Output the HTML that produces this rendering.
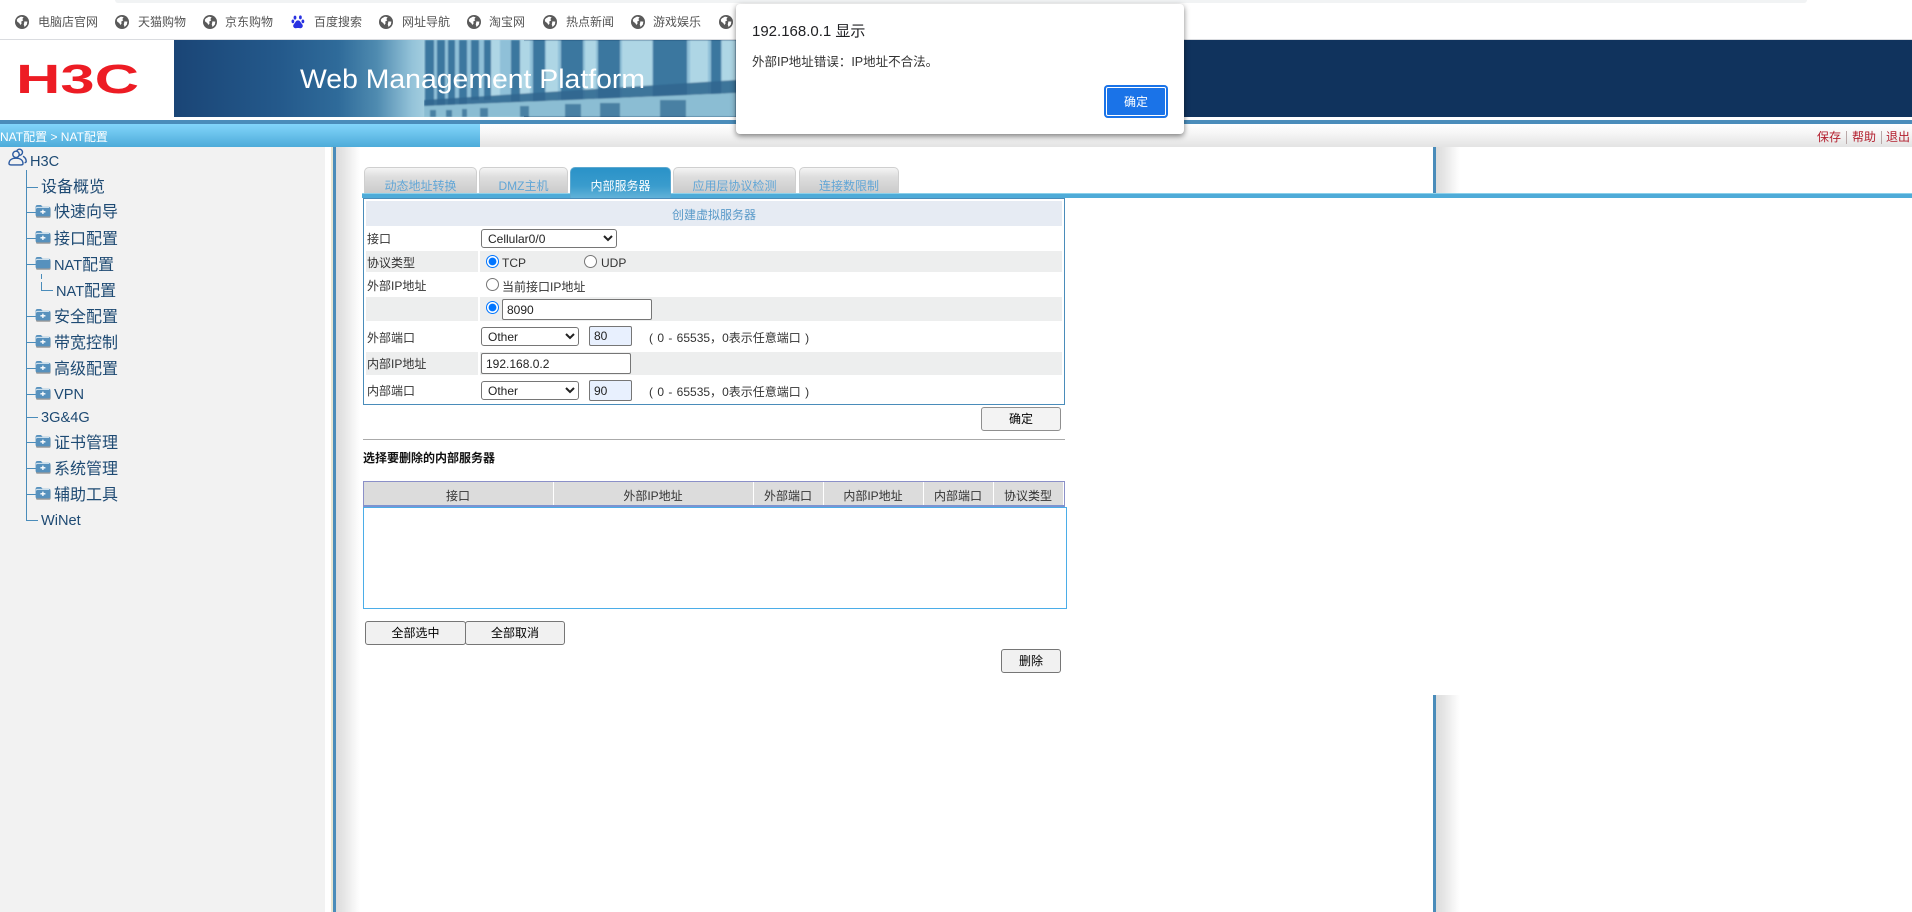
<!DOCTYPE html>
<html lang="zh"><head><meta charset="utf-8"><title>H3C</title>
<style>
html,body{margin:0;padding:0;background:#fff}
body{position:relative;width:1912px;height:912px;overflow:hidden;font:12px/16px "Liberation Sans","Noto Sans CJK SC",sans-serif;color:#222}
div,span,svg,input,select,button{position:absolute;box-sizing:border-box}
b.p{position:static;font-weight:400;font-family:"Noto Sans CJK TC",sans-serif}
.t{white-space:nowrap;height:16px;line-height:16px}
.bm{color:#555}
.tree{font-size:16px;color:#1e4a73;height:20px;line-height:20px;white-space:nowrap}
.tree i{font-style:normal;font-size:14.6px}
.ln{background:#4a8cba}
.tab{top:167px;height:26px;border:1px solid #cfcfcf;border-bottom:0;border-radius:5px 5px 0 0;background:linear-gradient(#f4f4f4,#dedede 35%,#cbcbcb);color:#62a6d6;text-align:center;line-height:36px}
.gray{background:#edeeee}
select{font:12px "Liberation Sans",sans-serif;color:#222;background:#fff;border:1px solid #767676;border-radius:3px;padding:0 0 0 2px;margin:0}
input[type=text]{font:12px "Liberation Sans",sans-serif;color:#222;border:1px solid #767676;border-radius:2px;padding:0 0 0 4px;margin:0;background:#fff}
input[type=radio]{margin:0;width:13px;height:13px;accent-color:#0075ff}
button{font:12px "Liberation Sans","Noto Sans CJK SC",sans-serif;color:#000;background:#f1f1f1;border:1px solid #767676;border-radius:3px;padding:0 0 2px;margin:0}
.lab{left:367px;color:#333}
.th{top:488px;color:#333;text-align:center;transform:translateX(-50%)}
</style></head><body>

<!-- browser chrome strip -->
<div style="left:115px;top:0;width:1692px;height:3px;background:#f1f3f4;border-radius:0 0 6px 6px"></div>
<div style="left:0;top:39px;width:1912px;height:1px;background:#dadce0"></div>

<svg width="0" height="0" style="left:0;top:0"><defs>
<g id="gl"><circle cx="7" cy="7" r="7" fill="#5a5a5a"/><path d="M3 3.2L6 1.6 8.6 2.2 7.4 4 8.2 5.4 6.2 6.6 6.6 8.4 5.4 10 4.2 8 2.2 6.6 1.8 4.8Z" fill="#fff"/><path d="M9.4 6.4L12.4 6.6 11.8 9.6 9.6 12 8.8 9.6Z" fill="#fff"/></g>
<g id="fo"><path d="M1 3.2Q1 1.2 3 1.2H6.4L8 3H14Q15.6 3 15.6 4.6V11.4Q15.6 13 14 13H2.6Q1 13 1 11.4Z" fill="#9a9a9a" transform="translate(0 .8)"/><path d="M.6 3Q.6 1 2.6 1H6L7.6 2.8H13.8Q15.4 2.8 15.4 4.4V10.8Q15.4 12.4 13.8 12.4H2.2Q.6 12.4 .6 10.8Z" fill="#5791bd"/><path d="M1.4 4.4Q1.4 3.4 2.4 3.4H14.2" stroke="#dbe9f3" fill="none"/><path d="M5.4 7.8H10.4M7.9 5.6V10" stroke="#fff" stroke-width="1.3"/></g>
<g id="fc"><path d="M1 3.2Q1 1.2 3 1.2H6.4L8 3H14Q15.6 3 15.6 4.6V11.4Q15.6 13 14 13H2.6Q1 13 1 11.4Z" fill="#9a9a9a" transform="translate(0 .8)"/><path d="M.6 3Q.6 1 2.6 1H6L7.6 2.8H13.8Q15.4 2.8 15.4 4.4V10.8Q15.4 12.4 13.8 12.4H2.2Q.6 12.4 .6 10.8Z" fill="#5791bd"/><path d="M1.4 4.4Q1.4 3.4 2.4 3.4H14.2" stroke="#dbe9f3" fill="none"/></g>
</defs></svg>

<!-- bookmarks -->
<svg style="left:15px;top:15px" width="14" height="14"><use href="#gl"/></svg><div class="t bm" style="left:38px;top:14px">电脑店官网</div>
<svg style="left:115px;top:15px" width="14" height="14"><use href="#gl"/></svg><div class="t bm" style="left:138px;top:14px">天猫购物</div>
<svg style="left:203px;top:15px" width="14" height="14"><use href="#gl"/></svg><div class="t bm" style="left:225px;top:14px">京东购物</div>
<svg style="left:291px;top:15px" width="14" height="14" viewBox="0 0 14 14" fill="#2932e1"><ellipse cx="4" cy="2.6" rx="1.4" ry="2"/><ellipse cx="9.4" cy="2.4" rx="1.4" ry="2"/><ellipse cx="1.9" cy="6.4" rx="1.4" ry="1.9"/><ellipse cx="11.9" cy="6.4" rx="1.4" ry="1.9"/><path d="M7 5.4C9.4 5.4 9.8 8 11.2 9.2 12.6 10.8 11.4 13.4 9 13.2 7.8 13 6.2 13 5 13.2 2.6 13.4 1.4 10.8 2.8 9.2 4.2 8 4.6 5.4 7 5.4Z"/></svg><div class="t bm" style="left:314px;top:14px">百度搜索</div>
<svg style="left:379px;top:15px" width="14" height="14"><use href="#gl"/></svg><div class="t bm" style="left:402px;top:14px">网址导航</div>
<svg style="left:467px;top:15px" width="14" height="14"><use href="#gl"/></svg><div class="t bm" style="left:489px;top:14px">淘宝网</div>
<svg style="left:543px;top:15px" width="14" height="14"><use href="#gl"/></svg><div class="t bm" style="left:566px;top:14px">热点新闻</div>
<svg style="left:631px;top:15px" width="14" height="14"><use href="#gl"/></svg><div class="t bm" style="left:653px;top:14px">游戏娱乐</div>
<svg style="left:719px;top:15px" width="14" height="14"><use href="#gl"/></svg>

<!-- header -->
<svg style="left:0;top:40px" width="174" height="77"><text transform="translate(16 53) scale(1.5 1)" font-family="Liberation Sans" font-weight="700" font-size="41" fill="#ed1c24">H3C</text></svg>
<svg style="left:174px;top:40px" width="1738" height="77" viewBox="174 40 1738 77">
<defs><linearGradient id="bg" x1="0" x2="1" y1="0" y2="0">
<stop offset="0" stop-color="#1a4576"/><stop offset=".3" stop-color="#24598b"/><stop offset=".47" stop-color="#2f6b9a"/><stop offset=".58" stop-color="#4f8bb0"/><stop offset=".68" stop-color="#94c3d9"/><stop offset=".72" stop-color="#a5cfe0"/></linearGradient>
<filter id="soft" x="0" y="0" width="1" height="1"><feGaussianBlur stdDeviation=".7"/></filter></defs>
<rect x="174" y="40" width="1738" height="77" fill="#10335d"/>
<rect x="174" y="40" width="350" height="77" fill="url(#bg)"/>
<g filter="url(#soft)">
<rect x="424" y="40" width="312" height="77" fill="#8fc0d8"/>
<g fill="#3a779f">
<rect x="425" y="40" width="9" height="77"/><rect x="437" y="40" width="8" height="77"/><rect x="448" y="40" width="7" height="77"/><rect x="459" y="40" width="8" height="77"/><rect x="471" y="40" width="8" height="60"/><rect x="484" y="40" width="7" height="60"/><rect x="511" y="40" width="9" height="62"/><rect x="533" y="40" width="12" height="64"/><rect x="561" y="40" width="22" height="66"/><rect x="598" y="40" width="22" height="66"/><rect x="653" y="40" width="34" height="68"/><rect x="711" y="40" width="10" height="77"/></g>
<g fill="#aed6e5"><rect x="491" y="40" width="9" height="60"/><rect x="520" y="40" width="10" height="62"/><rect x="546" y="40" width="12" height="66"/><rect x="585" y="40" width="11" height="66"/><rect x="622" y="40" width="14" height="68"/><rect x="634" y="40" width="18" height="68"/><rect x="690" y="40" width="18" height="68"/><rect x="722" y="40" width="14" height="68"/></g>
<path d="M424 100L736 80V93L424 106Z" fill="#2f6790" opacity=".88"/>
<path d="M424 106L736 93V117H424Z" fill="#8bbdd3"/>
<g fill="#4a80a3"><rect x="430" y="110" width="6" height="7"/><rect x="446" y="110" width="6" height="7"/><rect x="462" y="109" width="5" height="8"/><rect x="480" y="108" width="8" height="9"/><rect x="520" y="106" width="9" height="11"/><rect x="565" y="104" width="16" height="13"/><rect x="600" y="103" width="20" height="14"/><rect x="660" y="100" width="26" height="17"/></g>
</g>
<text x="300" y="88" font-family="Liberation Sans" font-size="27" fill="#fff" textLength="345" lengthAdjust="spacingAndGlyphs">Web Management Platform</text>
</svg>

<!-- top bars -->
<div style="left:0;top:120px;width:1912px;height:4px;background:#4a8cba"></div>
<div style="left:480px;top:124px;width:1432px;height:23px;background:linear-gradient(#fff,#f6f6f6 40%,#e3e3e3)"></div>
<div style="left:0;top:124px;width:480px;height:23px;background:linear-gradient(#82d5fb,#4dabd9)"></div>
<div class="t" style="left:0;top:129px;color:#fff">NAT配置 &gt; NAT配置</div>
<div class="t" style="left:1817px;top:129px;color:#b3202f;width:24px">保存</div>
<div style="left:1846px;top:131px;width:1px;height:13px;background:#b9a9a9"></div>
<div class="t" style="left:1852px;top:129px;color:#b3202f">帮助</div>
<div style="left:1881px;top:131px;width:1px;height:13px;background:#b9a9a9"></div>
<div class="t" style="left:1886px;top:129px;color:#b3202f">退出</div>

<!-- side -->
<div style="left:0;top:147px;width:325px;height:765px;background:#f2f2f2"></div>
<div style="left:331px;top:147px;width:2px;height:765px;background:#e8e6d3"></div>
<div style="left:333px;top:147px;width:3px;height:765px;background:#4a8cba"></div>
<div style="left:336px;top:147px;width:24px;height:765px;background:linear-gradient(90deg,#dcdcdc,#e6e6e6 35%,#f6f6f6 75%,#fff)"></div>

<!-- right scroll-side -->
<div style="left:1433px;top:147px;width:3px;height:46px;background:#4a8cba"></div>
<div style="left:1436px;top:147px;width:24px;height:46px;background:linear-gradient(90deg,#dcdcdc,#e6e6e6 35%,#f6f6f6 75%,#fff)"></div>
<div style="left:1433px;top:695px;width:3px;height:217px;background:#4a8cba"></div>
<div style="left:1436px;top:695px;width:24px;height:217px;background:linear-gradient(90deg,#dcdcdc,#e6e6e6 35%,#f6f6f6 75%,#fff)"></div>

<!-- tree -->
<svg style="left:8px;top:148px" width="19" height="18" viewBox="0 0 19 18" fill="none" stroke="#2c5aa0" stroke-width="1.4"><circle cx="11.5" cy="4.2" r="3"/><path d="M15 8.2C17 9.2 18.2 11 18.2 13.4 18.2 14 17.6 14.6 16.6 14.8"/><circle cx="8" cy="6.4" r="3.2" fill="#f2f2f2"/><path d="M1 15.8C1 12 4 10.2 8 10.2 12 10.2 15 12 15 15.8 15 16.6 14 16.9 13 16.9H3C2 16.9 1 16.6 1 15.8Z" fill="#f2f2f2"/></svg>
<div class="tree" style="left:30px;top:152px"><i>H3C</i></div>

<div class="ln" style="left:26px;top:170px;width:1px;height:350px"></div>
<div class="ln" style="left:26px;top:187px;width:12px;height:1px"></div>
<div class="ln" style="left:26px;top:212px;width:10px;height:1px"></div>
<div class="ln" style="left:26px;top:238px;width:10px;height:1px"></div>
<div class="ln" style="left:26px;top:264px;width:10px;height:1px"></div>
<div class="ln" style="left:26px;top:316px;width:10px;height:1px"></div>
<div class="ln" style="left:26px;top:342px;width:10px;height:1px"></div>
<div class="ln" style="left:26px;top:368px;width:10px;height:1px"></div>
<div class="ln" style="left:26px;top:394px;width:10px;height:1px"></div>
<div class="ln" style="left:26px;top:417px;width:12px;height:1px"></div>
<div class="ln" style="left:26px;top:442px;width:10px;height:1px"></div>
<div class="ln" style="left:26px;top:468px;width:10px;height:1px"></div>
<div class="ln" style="left:26px;top:494px;width:10px;height:1px"></div>
<div class="ln" style="left:26px;top:520px;width:12px;height:1px"></div>
<div class="ln" style="left:41px;top:274px;width:1px;height:5px"></div>
<div class="ln" style="left:41px;top:282px;width:1px;height:9px"></div>
<div class="ln" style="left:41px;top:290px;width:12px;height:1px"></div>

<svg style="left:35px;top:204px" width="16" height="15"><use href="#fo"/></svg>
<svg style="left:35px;top:230px" width="16" height="15"><use href="#fo"/></svg>
<svg style="left:35px;top:256px" width="16" height="15"><use href="#fc"/></svg>
<svg style="left:35px;top:308px" width="16" height="15"><use href="#fo"/></svg>
<svg style="left:35px;top:334px" width="16" height="15"><use href="#fo"/></svg>
<svg style="left:35px;top:360px" width="16" height="15"><use href="#fo"/></svg>
<svg style="left:35px;top:386px" width="16" height="15"><use href="#fo"/></svg>
<svg style="left:35px;top:434px" width="16" height="15"><use href="#fo"/></svg>
<svg style="left:35px;top:460px" width="16" height="15"><use href="#fo"/></svg>
<svg style="left:35px;top:486px" width="16" height="15"><use href="#fo"/></svg>

<div class="tree" style="left:41px;top:178px">设备概览</div>
<div class="tree" style="left:54px;top:203px">快速向导</div>
<div class="tree" style="left:54px;top:230px">接口配置</div>
<div class="tree" style="left:54px;top:256px"><i>NAT</i>配置</div>
<div class="tree" style="left:56px;top:282px"><i>NAT</i>配置</div>
<div class="tree" style="left:54px;top:308px">安全配置</div>
<div class="tree" style="left:54px;top:334px">带宽控制</div>
<div class="tree" style="left:54px;top:360px">高级配置</div>
<div class="tree" style="left:54px;top:385px"><i>VPN</i></div>
<div class="tree" style="left:41px;top:408px"><i>3G&amp;4G</i></div>
<div class="tree" style="left:54px;top:434px">证书管理</div>
<div class="tree" style="left:54px;top:460px">系统管理</div>
<div class="tree" style="left:54px;top:486px">辅助工具</div>
<div class="tree" style="left:41px;top:511px"><i>WiNet</i></div>

<!-- tabs -->
<div style="left:362px;top:193px;width:1550px;height:1px;background:#8bd0ea"></div>
<div style="left:362px;top:194px;width:1550px;height:4px;background:#4eabd8"></div>
<div class="tab" style="left:364px;width:113px">动态地址转换</div>
<div class="tab" style="left:479px;width:89px">DMZ主机</div>
<div class="tab" style="left:570px;width:101px;height:31px;border-color:#5da9d0;background:linear-gradient(#2a92c8,#3a9ccd 60%,#62b2d8);color:#fff">内部服务器</div>
<div class="tab" style="left:673px;width:123px">应用层协议检测</div>
<div class="tab" style="left:799px;width:100px">连接数限制</div>

<!-- form -->
<div style="left:363px;top:198px;width:702px;height:207px;border:1px solid #4a8cba;border-top-width:1px"></div>
<div style="left:366px;top:201px;width:696px;height:25px;background:#e6ebf3"></div>
<div class="t" style="left:366px;width:696px;top:207px;text-align:center;color:#5a9ac9">创建虚拟服务器</div>

<div class="gray" style="left:366px;top:251px;width:112px;height:21px"></div>
<div class="gray" style="left:480px;top:251px;width:582px;height:21px"></div>
<div class="gray" style="left:366px;top:297px;width:112px;height:24px"></div>
<div class="gray" style="left:480px;top:297px;width:582px;height:24px"></div>
<div class="gray" style="left:366px;top:352px;width:112px;height:23px"></div>
<div class="gray" style="left:480px;top:352px;width:582px;height:23px"></div>

<div class="t lab" style="top:231px">接口</div>
<div class="t lab" style="top:255px">协议类型</div>
<div class="t lab" style="top:278px">外部IP地址</div>
<div class="t lab" style="top:330px">外部端口</div>
<div class="t lab" style="top:356px">内部IP地址</div>
<div class="t lab" style="top:383px">内部端口</div>

<select style="left:481px;top:229px;width:136px;height:19px"><option>Cellular0/0</option></select>
<input type="radio" name="a" checked style="left:486px;top:255px">
<div class="t" style="left:502px;top:255px;color:#333">TCP</div>
<input type="radio" name="a" style="left:584px;top:255px">
<div class="t" style="left:601px;top:255px;color:#333">UDP</div>
<input type="radio" name="b" style="left:486px;top:278px">
<div class="t" style="left:502px;top:279px;color:#333">当前接口IP地址</div>
<input type="radio" name="b" checked style="left:486px;top:301px">
<input type="text" value="8090" style="left:502px;top:299px;width:150px;height:21px">

<select style="left:481px;top:327px;width:98px;height:19px"><option>Other</option></select>
<input type="text" value="80" style="left:589px;top:326px;width:43px;height:20px;background:#e8f0fe">
<div class="t" style="left:649px;top:330px;color:#333;word-spacing:1px">(&nbsp;0 - 65535<b class="p">，</b>0表示任意端口 )</div>
<input type="text" value="192.168.0.2" style="left:481px;top:353px;width:150px;height:21px">
<select style="left:481px;top:381px;width:98px;height:19px"><option>Other</option></select>
<input type="text" value="90" style="left:589px;top:380px;width:43px;height:21px;background:#e8f0fe">
<div class="t" style="left:649px;top:384px;color:#333;word-spacing:1px">(&nbsp;0 - 65535<b class="p">，</b>0表示任意端口 )</div>

<button style="left:981px;top:407px;width:80px;height:24px;background:#f3f3f3;border-color:#8f8f8f">确定</button>
<div style="left:363px;top:439px;width:702px;height:1px;background:#aaa"></div>
<div class="t" style="left:363px;top:450px;font-weight:700;color:#111">选择要删除的内部服务器</div>

<!-- list -->
<div style="left:363px;top:481px;width:702px;height:27px;background:#dcdcdc;border:1px solid #8b90c8;border-bottom:3px solid #7d93d0"></div>
<div style="left:553px;top:482px;width:1px;height:23px;background:#fff"></div>
<div style="left:753px;top:482px;width:1px;height:23px;background:#fff"></div>
<div style="left:823px;top:482px;width:1px;height:23px;background:#fff"></div>
<div style="left:923px;top:482px;width:1px;height:23px;background:#fff"></div>
<div style="left:993px;top:482px;width:1px;height:23px;background:#fff"></div>
<div style="left:1063px;top:482px;width:1px;height:23px;background:#fff"></div>
<div class="t th" style="left:458px">接口</div>
<div class="t th" style="left:653px">外部IP地址</div>
<div class="t th" style="left:788px">外部端口</div>
<div class="t th" style="left:873px">内部IP地址</div>
<div class="t th" style="left:958px">内部端口</div>
<div class="t th" style="left:1028px">协议类型</div>
<div style="left:363px;top:507px;width:704px;height:102px;border:1px solid #4bade8;background:#fff"></div>

<button style="left:365px;top:621px;width:101px;height:24px">全部选中</button>
<button style="left:465px;top:621px;width:100px;height:24px">全部取消</button>
<button style="left:1001px;top:649px;width:60px;height:24px">删除</button>

<!-- dialog -->
<div style="left:736px;top:4px;width:448px;height:130px;background:#fff;border-radius:4px;box-shadow:0 2px 6px rgba(0,0,0,.5)"></div>
<div class="t" style="left:752px;top:24px;font-size:15px;color:#202124">192.168.0.1 显示</div>
<div class="t" style="left:752px;top:53px;font-size:12.5px;color:#333">外部IP地址错误<b class="p">：</b>IP地址不合法。</div>
<div style="left:1104px;top:85px;width:64px;height:33px;background:#1a73e8;border-radius:4px;box-shadow:inset 0 0 0 2px #1a73e8,inset 0 0 0 3px #fff"></div>
<div class="t" style="left:1104px;top:94px;width:64px;text-align:center;color:#fff">确定</div>
</body></html>
